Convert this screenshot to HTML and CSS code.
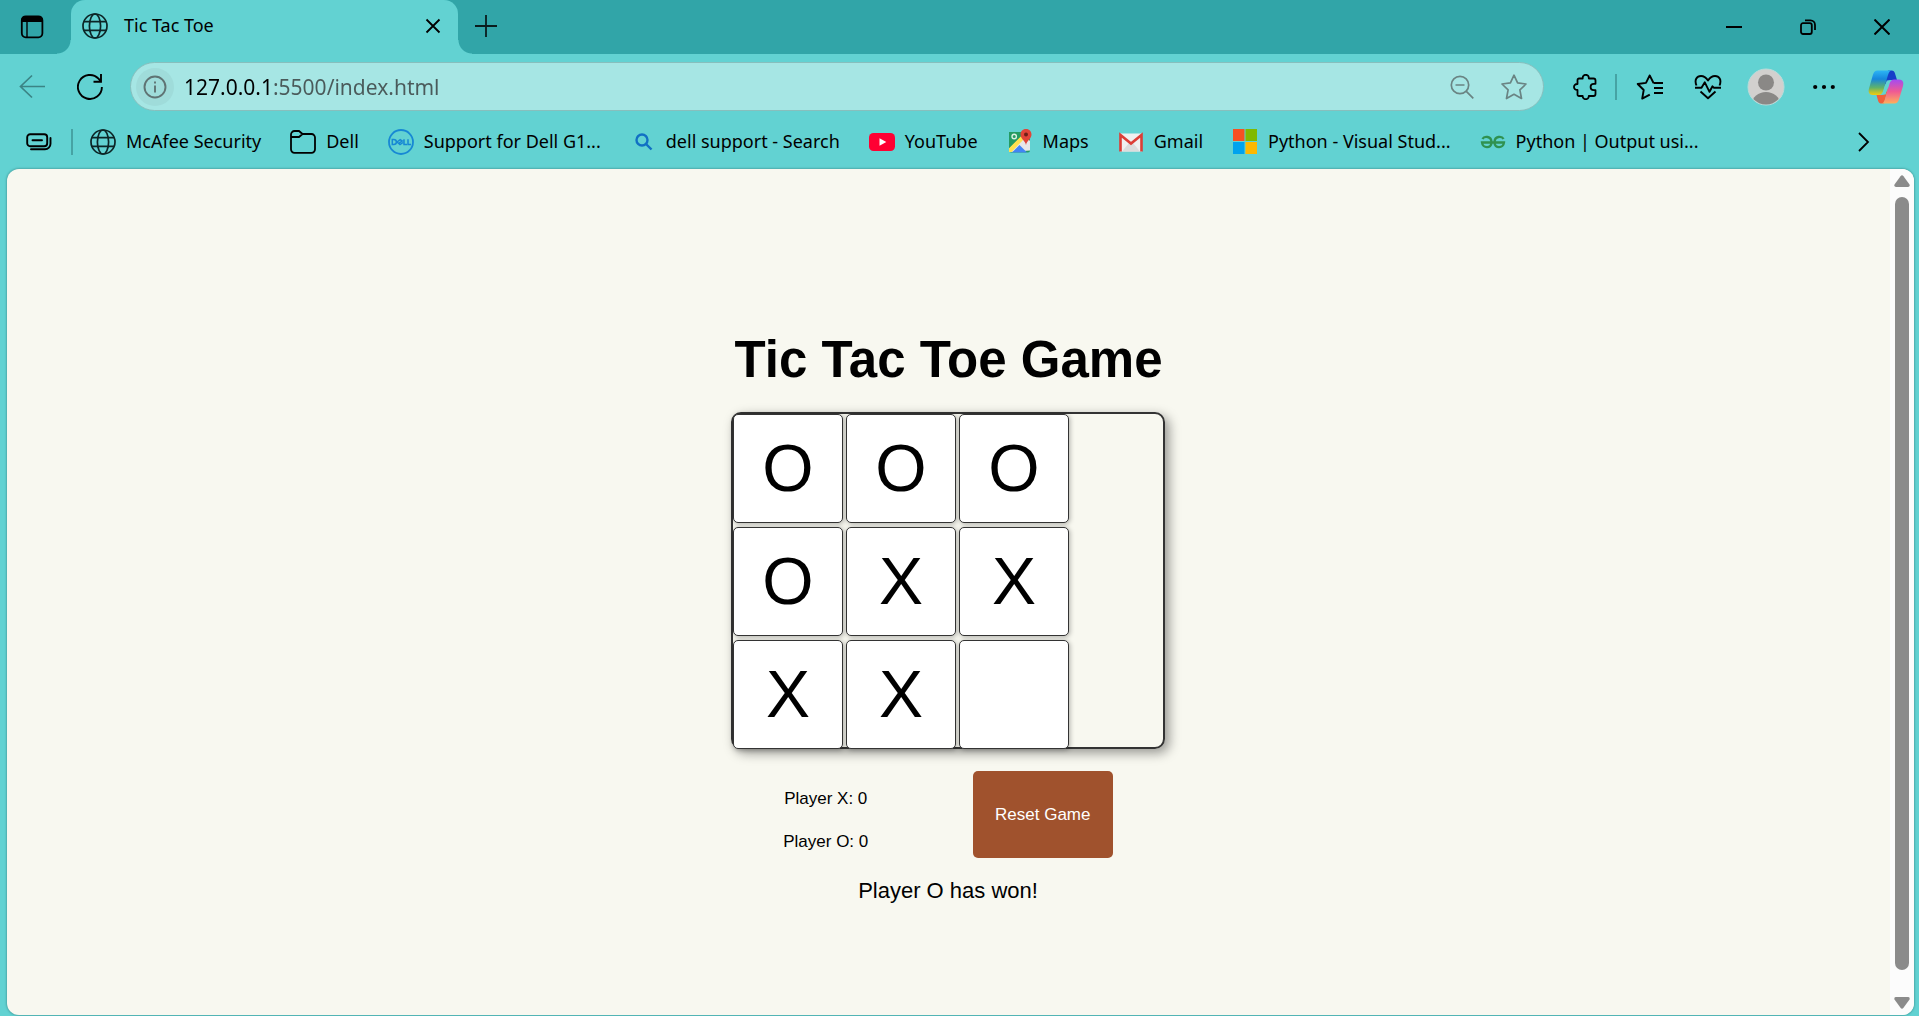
FILE: index.html
```html
<!DOCTYPE html>
<html lang="en">
<head>
<meta charset="utf-8">
<meta name="viewport" content="width=device-width, initial-scale=1">
<title>Tic Tac Toe</title>
<link rel="stylesheet" href="styles.css">
</head>
<body>
<svg class="defs" aria-hidden="true">
  <symbol id="globe" viewBox="0 0 26 26"><g fill="none" stroke="#0c2526" stroke-width="1.7"><circle cx="13" cy="13" r="12"/><ellipse cx="13" cy="13" rx="5.6" ry="12"/><path d="M2 8.6h22M2 17.4h22"/></g></symbol>
</svg>

<header class="titlebar">
  <button class="icon-btn tab-actions" aria-label="Tab actions">
    <svg width="24" height="24" viewBox="0 0 24 24"><rect x="1.8" y="1.3" width="20.6" height="21" rx="4" fill="none" stroke="#000" stroke-width="1.8"/><path d="M1.500 7V5a4 4 0 0 1 4-4h13a4 4 0 0 1 4 4v2z"/><path d="M7 7v15" stroke="#000" stroke-width="1.4"/></svg>
  </button>
  <div class="tab">
    <svg width="26" height="26"><use href="#globe"/></svg>
    <span class="tab-title">Tic Tac Toe</span>
    <button class="icon-btn tab-close" aria-label="Close tab"><svg width="16" height="16" viewBox="0 0 16 16"><path d="M1.500 1.500l13 13M14.500 1.500l-13 13" stroke="#000" stroke-width="1.8"/></svg></button>
  </div>
  <button class="icon-btn new-tab" aria-label="New tab"><svg width="22" height="22" viewBox="0 0 22 22"><path d="M11 0v22M0 11h22" stroke="#0a1c1d" stroke-width="1.8"/></svg></button>
  <div class="window-controls">
    <button class="icon-btn" aria-label="Minimize"><svg width="16" height="16" viewBox="0 0 16 16"><path d="M0 8h16" stroke="#000" stroke-width="2"/></svg></button>
    <button class="icon-btn" aria-label="Restore"><svg width="16" height="16" viewBox="0 0 16 16" fill="none" stroke="#000" stroke-width="1.8"><rect x="1" y="4.200" width="10.800" height="10.800" rx="2"/><path d="M5 1.400h5.500a4.500 4.500 0 0 1 4.500 4.500v5"/></svg></button>
    <button class="icon-btn" aria-label="Close"><svg width="16" height="16" viewBox="0 0 16 16"><path d="M.5.5l15 15M15.500.5l-15 15" stroke="#000" stroke-width="2"/></svg></button>
  </div>
</header>

<nav class="toolbar" aria-label="Browser">
  <button class="icon-btn back" aria-label="Back"><svg width="26" height="26" viewBox="0 0 26 26" fill="none" stroke="#3b8485" stroke-width="1.7"><path d="M26 12.500H1.500M13 1.500L1.500 12.500 13 23.500"/></svg></button>
  <button class="icon-btn refresh" aria-label="Refresh"><svg width="26" height="26" viewBox="0 0 26 26" fill="none" stroke="#000" stroke-width="1.900"><path d="M24.900 13A12 12 0 1 1 21.500 4.600L24 7.500M24 0v7.700h-7.500"/></svg></button>
  <div class="address">
    <button class="icon-btn site-info" aria-label="Site information"><svg width="24" height="24" viewBox="0 0 24 24" fill="none" stroke="#5f7373" stroke-width="1.900"><circle cx="12" cy="12" r="10.500"/><path d="M12 10.500v7M12 6.500v2"/></svg></button>
    <input class="url" type="text" aria-label="Address" value="127.0.0.1:5500/index.html">
    <button class="icon-btn" aria-label="Zoom"><svg width="24" height="24" viewBox="0 0 24 24" fill="none" stroke="#6a8483" stroke-width="1.700"><circle cx="10" cy="10" r="8.700"/><path d="M16.300 16.300l7 7M5.500 10h9"/></svg></button>
    <button class="icon-btn" aria-label="Add to favorites"><svg width="26" height="26" viewBox="0 0 26 26" fill="none" stroke="#6a8483" stroke-width="1.700" stroke-linejoin="round"><path d="M13 1.200l3.600 7.700 8.400 1.100-6.100 5.800 1.600 8.700L13 20.300l-7.500 4.200 1.600-8.700L1 10l8.400-1.100z"/></svg></button>
  </div>
  <button class="icon-btn extensions" aria-label="Extensions"><svg width="24" height="26" viewBox="0 0 24 26" fill="none" stroke="#000" stroke-width="1.800" stroke-linejoin="round"><path d="M6 4.500h3.700c-.3-5 6.400-5 6.100 0h4.700a2 2 0 0 1 2 2v3.300h-1.700c-4.300.1-4.300 6.300 0 6.400h1.700v3.800a2 2 0 0 1-2 2h-4.700c.3 4.300-6.400 4.300-6.100 0H6a1.500 1.500 0 0 1-1.500-1.500V16C-.2 16.300-.2 9.700 4.500 10V6A1.500 1.500 0 0 1 6 4.500z"/></svg></button>
  <span class="divider"></span>
  <button class="icon-btn" aria-label="Favorites"><svg width="28" height="26" viewBox="0 0 28 26" fill="none" stroke="#000" stroke-width="1.900" stroke-linejoin="round"><path d="M17.500 9L13.700 1.400 10 8.900 1.700 10l6 6-1.500 8.600 7.600-4M17.500 9h9.500M18 14h9M18 19h9"/></svg></button>
  <button class="icon-btn" aria-label="Browser essentials"><svg width="28" height="26" viewBox="0 0 28 26" fill="none" stroke="#000" stroke-width="1.900" stroke-linejoin="round"><path d="M2.500 11.500C0 5.500 3 2 7 2c3 0 5 1.500 7 4.500C16 3.500 18 2 21 2c4 0 7 3.500 4.500 9.500M1 13.800h6.500l3.300-5.500 4.700 9.500 3-5.500 1.500 1.500h7M6.500 17.500l7.500 6.800 7.500-6.800"/></svg></button>
  <button class="icon-btn" aria-label="Profile"><svg width="38" height="38" viewBox="0 0 38 38"><clipPath id="face"><circle cx="19" cy="19" r="17.500"/></clipPath><circle cx="19" cy="19" r="18" fill="#d2d0ce" stroke="#b9dcda"/><g clip-path="url(#face)" fill="#8a8886"><circle cx="19" cy="14.500" r="8"/><ellipse cx="19" cy="36" rx="14" ry="12"/></g></svg></button>
  <button class="icon-btn" aria-label="Settings and more"><svg width="22" height="6" viewBox="0 0 22 6"><circle cx="2.200" cy="3" r="2.100"/><circle cx="11" cy="3" r="2.100"/><circle cx="19.800" cy="3" r="2.100"/></svg></button>
  <button class="icon-btn copilot" aria-label="Copilot"><svg width="36" height="34" viewBox="0 0 36 34">
    <defs>
      <linearGradient id="cp1" x1="0" y1="0" x2="0" y2="1"><stop offset="0" stop-color="#2cb5f5"/><stop offset=".35" stop-color="#1687dc"/><stop offset=".7" stop-color="#5fb36a"/><stop offset="1" stop-color="#f6cc0c"/></linearGradient>
      <linearGradient id="cp2" x1="0" y1="0" x2="0" y2="1"><stop offset="0" stop-color="#a34bf2"/><stop offset=".5" stop-color="#ef5a93"/><stop offset="1" stop-color="#ffae5c"/></linearGradient>
    </defs>
    <path d="M20 .5h3.500c2 0 3 1.200 3.500 3L29 10h-6c-2.500 0-4 1-5 3.500L16 16z" fill="#1540c8"/>
    <path d="M16 33.500h-3c-1.500 0-2.500-1-3-3L8.500 25h5c3 0 4-1.500 5-4l2-4z" fill="#f0603a"/>
    <path d="M9.500.5H24c-2 0-3 1.200-4 4.500l-4.500 15c-1 3.500-2.500 5-5 5H5c-4 0-5-3-4-6.500L5 4.500C6 1.800 7.200.5 9.500.5z" fill="url(#cp1)"/>
    <path d="M26.500 33.500H13c2 0 3-1.200 4-4.500l4.200-14.500c1-3.500 2.300-5 5-5h4.800c4 0 5 3 4 6.500l-4 13.500c-1 2.700-2.200 4-4.500 4z" fill="url(#cp2)"/>
    <path d="M18.800 10.500h4c-1 1-1.300 2-1.800 3.500L17.500 24.500h-4c1-1 1.500-2.300 2-4z" fill="#62d2d2"/>
  </svg></button>
</nav>

<nav class="bookmarks" aria-label="Favorites bar">
  <button class="icon-btn collapse" aria-label="Workspaces"><svg width="26" height="18" viewBox="0 0 26 18" fill="none" stroke="#000" stroke-width="1.900"><rect x="1.200" y="1.200" width="20" height="12" rx="3"/><path d="M6.500 7.200h9.500M5 16.300h14a5.500 5.500 0 0 0 5.500-5.500V5" stroke-linecap="round"/></svg></button>
  <span class="divider"></span>
  <a class="bookmark" href="#"><svg width="26" height="26"><use href="#globe"/></svg><span>McAfee Security</span></a>
  <a class="bookmark" href="#"><svg width="26" height="26" viewBox="0 0 26 26" fill="none" stroke="#000" stroke-width="1.800"><path d="M1 8V5.500a3.500 3.500 0 0 1 3.500-3.500H9l3.500 3H21.500A3.500 3.500 0 0 1 25 8.500v11.800a3.500 3.500 0 0 1-3.500 3.500h-17A3.500 3.500 0 0 1 1 20.300zM1 8h8l3.500-3"/></svg><span>Dell</span></a>
  <a class="bookmark" href="#"><svg width="26" height="26" viewBox="0 0 26 26"><circle cx="13" cy="13" r="12" fill="none" stroke="#1788d4" stroke-width="1.800"/><g fill="none" stroke="#1788d4" stroke-width="1.500"><path d="M4.300 10.500v5h1.400c3.600 0 3.600-5 0-5zM9 13l3.200-2.300 2 1.300-3.300 2.200M9 13l3 2.500 3-2M16 10.200v5.300h3M20 10.200v5.300h3"/></g></svg><span>Support for Dell G1...</span></a>
  <a class="bookmark" href="#"><svg width="26" height="26" viewBox="0 0 26 26" fill="none" stroke="#1170c4" stroke-width="2.400"><circle cx="12" cy="11" r="5.500"/><path d="M16 15l5.500 5.500"/></svg><span>dell support - Search</span></a>
  <a class="bookmark" href="#"><svg width="26" height="26" viewBox="0 0 26 26"><rect y="4" width="26" height="18" rx="4.500" fill="#f03"/><path d="M10.500 9.200l6.800 3.800-6.800 3.800z" fill="#fff"/></svg><span>YouTube</span></a>
  <a class="bookmark" href="#"><svg width="26" height="26" viewBox="0 0 26 26"><rect x="2" y="3" width="21" height="20.500" rx="2" fill="#249b63"/><path d="M2.500 23L18 7l5 5v9.500z" fill="#e8e8e8"/><path d="M2 19L15 6l3 3L4.500 23H2z" fill="#ffe14f"/><path d="M2 3h13l-.5 3.500L2 19z" fill="#249b63"/><path d="M5 23.500l7.500-7.500 7.500 7.500z" fill="#4285f4"/><path d="M19 0c-3.500 0-5.500 2.500-5.500 5.600 0 4.400 4.500 5.900 5.500 10.400 1-4.500 5.500-6 5.500-10.400C24.500 2.500 22.500 0 19 0z" fill="#e04438"/><circle cx="19" cy="5.600" r="2" fill="#6e1f18"/><circle cx="7.200" cy="7.500" r="2.200" fill="none" stroke="#d9f0e2" stroke-width="1.400"/></svg><span>Maps</span></a>
  <a class="bookmark" href="#"><svg width="26" height="26" viewBox="0 0 26 26"><path d="M2 4.500h22v18H2z" fill="#f0f0f0"/><path d="M4 22.500l7-8.500h4l7 8.500z" fill="#dcdcdc"/><path d="M2.500 22.500V6L13 14.500 23.500 6v16.500" fill="none" stroke="#dc3e36" stroke-width="2.600"/></svg><span>Gmail</span></a>
  <a class="bookmark" href="#"><svg width="26" height="26" viewBox="0 0 26 26"><path d="M1 0h11.500v12H1z" fill="#f65022"/><path d="M13.500 0H25v12H13.500z" fill="#80b900"/><path d="M1 13h11.500v12H1z" fill="#00a3ee"/><path d="M13.500 13H25v12H13.500z" fill="#fdb800"/></svg><span>Python - Visual Stud...</span></a>
  <a class="bookmark" href="#"><svg width="26" height="26" viewBox="0 0 26 26" fill="none" stroke="#2f9150" stroke-width="2.300"><path d="M2.500 10C4 7 11.500 6.500 11.500 13.500c0 6.500-9 6-9.500 0h22c-.5 6-9.500 6.500-9.500 0C14.500 6.500 22 7 23.500 10"/></svg><span>Python | Output usi...</span></a>
  <button class="icon-btn more" aria-label="More favorites"><svg width="12" height="20" viewBox="0 0 12 20" fill="none" stroke="#000" stroke-width="1.800"><path d="M1 1l9 9-9 9"/></svg></button>
</nav>

<div class="viewport">
  <main class="page">
    <h1 class="heading">Tic Tac Toe Game</h1>
    <div class="game">
      <div class="board">
        <button class="cell">O</button>
        <button class="cell">O</button>
        <button class="cell">O</button>
        <button class="cell">O</button>
        <button class="cell">X</button>
        <button class="cell">X</button>
        <button class="cell">X</button>
        <button class="cell">X</button>
        <button class="cell" aria-label="Empty cell"></button>
      </div>
      <div class="controls">
        <div class="scores">
          <p>Player X: 0</p>
          <p>Player O: 0</p>
        </div>
        <button class="reset">Reset Game</button>
      </div>
      <p class="status">Player O has won!</p>
    </div>
  </main>
  <div class="scrollbar" aria-hidden="true">
    <svg width="16" height="12" viewBox="0 0 16 12"><path d="M6.500 1.200Q8-.8 9.500 1.200l6 8.300Q16.200 12 14 12H2Q-.2 12 .5 9.500z" fill="#8b8b8b"/></svg>
    <span class="thumb"></span>
    <svg width="16" height="12" viewBox="0 0 16 12"><path d="M6.500 10.800Q8 12.800 9.500 10.800l6-8.300Q16.200 0 14 0H2Q-.2 0 .5 2.500z" fill="#8b8b8b"/></svg>
  </div>
</div>
</body>
</html>
```
FILE: styles.css
```css
*,
*::before,
*::after {
  box-sizing: border-box;
}

body {
  margin: 0;
  min-height: 100vh;
  display: flex;
  flex-direction: column;
  background: #62d2d2;
  color: #000;
  font-family: "Noto Sans", "Open Sans", sans-serif;
  font-size: 18px;
  line-height: 24px;
}

.defs {
  position: absolute;
  width: 0;
  height: 0;
}

svg {
  display: block;
  flex: none;
}

.icon-btn {
  display: flex;
  align-items: center;
  justify-content: center;
  flex: none;
  width: 50px;
  height: 38px;
  padding: 0;
  border: 0;
  background: none;
}

/* Title bar */
.titlebar {
  display: flex;
  align-items: center;
  height: 54px;
  background: #31a5a8;
}

.tab-actions {
  width: 64px;
}

.tab {
  position: relative;
  display: flex;
  align-items: center;
  width: 387px;
  height: 54px;
  margin-left: 7px;
  padding: 0 12px 2px 11px;
  border-radius: 14px 14px 0 0;
  background: #62d2d2;
}

.tab::before,
.tab::after {
  content: "";
  position: absolute;
  bottom: 0;
  width: 14px;
  height: 14px;
}

.tab::before {
  right: 100%;
  background: radial-gradient(circle at 0 0, transparent 13px, #62d2d2 14px);
}

.tab::after {
  left: 100%;
  background: radial-gradient(circle at 100% 0, transparent 13px, #62d2d2 14px);
}

.tab-title {
  flex: 1;
  margin-left: 16px;
  padding-bottom: 2px;
}

.tab-close {
  width: 26px;
}

.new-tab {
  width: 44px;
  margin: 0 0 3px 6px;
}

.window-controls {
  display: flex;
  margin-left: auto;
}

.window-controls .icon-btn {
  width: 74px;
}

/* Toolbar */
.toolbar {
  display: flex;
  align-items: center;
  gap: 8px;
  padding: 8px 8px 4px 7px;
}

.refresh {
  margin-right: 7px;
}

.address {
  display: flex;
  align-items: center;
  flex: 1;
  gap: 2px;
  min-width: 0;
  height: 49px;
  margin-right: 11px;
  padding: 0 4px 0 5px;
  border: 1px solid #87bfbd;
  border-radius: 25px;
  background: #a6e6e4;
}

.site-info {
  width: 38px;
  border-radius: 50%;
  background: #9fdcda;
}

.url {
  flex: 1;
  min-width: 0;
  height: 32px;
  margin-left: 8px;
  padding: 0;
  border: 0;
  outline: 0;
  background: linear-gradient(90deg, #000 87px, #4a5a5a 87px) text;
  color: transparent;
  caret-color: #000;
  font: inherit;
  font-size: 21px;
}

.extensions {
  width: 44px;
}

.copilot {
  margin-left: 4px;
}

.divider {
  width: 2px;
  height: 26px;
  background: #46a3a4;
}

/* Favorites bar */
.bookmarks {
  display: flex;
  align-items: center;
  height: 54px;
  padding: 0 30px 0 14px;
}

.bookmarks .divider {
  margin: 0 17px 0 7px;
}

.bookmark {
  display: flex;
  align-items: center;
  flex: none;
  gap: 10px;
  margin-right: 29px;
  color: #000;
  text-decoration: none;
  white-space: nowrap;
}

.bookmark span {
  padding-bottom: 2px;
}

.more {
  margin-left: auto;
}

/* Page area */
.viewport {
  display: flex;
  flex: 1;
  margin: 0 5px 1px 7px;
  border-radius: 12px;
  overflow: hidden;
  background: #f8f8f0;
  box-shadow: 0 0 2px 1px #4cabab;
}

.page {
  display: flex;
  flex: 1;
  flex-direction: column;
  align-items: center;
  justify-content: center;
  padding-top: 50px;
  font-family: "Liberation Sans", Arial, sans-serif;
}

.heading {
  margin: 0 0 22px;
  font-size: 51px;
  line-height: 60px;
}

.game {
  width: 434px;
  margin-right: 1px;
}

.board {
  display: grid;
  grid-template-columns: repeat(3, 110px);
  grid-auto-rows: 109px;
  gap: 4px 3px;
  height: 337px;
  border: 2px solid #333;
  border-radius: 10px;
  box-shadow: 4px 4px 12px rgba(0, 0, 0, 0.4);
}

.cell {
  padding: 0 0 2px;
  border: 1px solid #333;
  border-radius: 5px;
  background: #fff;
  box-shadow: 1px 1px 5px rgba(0, 0, 0, 0.3);
  color: #000;
  font-family: inherit;
  font-size: 66px;
  line-height: 72px;
}

.controls {
  display: flex;
  justify-content: space-around;
  margin-top: 22px;
}

.scores {
  display: flex;
  flex-direction: column;
  justify-content: flex-end;
  gap: 23px;
  padding-bottom: 6px;
  font-size: 17px;
  line-height: 20px;
  text-align: center;
}

.scores p {
  margin: 0;
}

.reset {
  width: 140px;
  height: 87px;
  padding: 0;
  border: 0;
  border-radius: 5px;
  background: #a0522d;
  color: #fff;
  font-family: inherit;
  font-size: 17px;
}

.status {
  margin: 20px 0 0;
  font-size: 22px;
  line-height: 26px;
  text-align: center;
}

.scrollbar {
  display: flex;
  flex-direction: column;
  align-items: center;
  width: 24px;
  padding: 6px 0;
  background: #fcfcfc;
}

.thumb {
  flex: 1;
  width: 14px;
  margin: 10px 0 27px;
  border-radius: 7px;
  background: #8b8b8b;
}
```
